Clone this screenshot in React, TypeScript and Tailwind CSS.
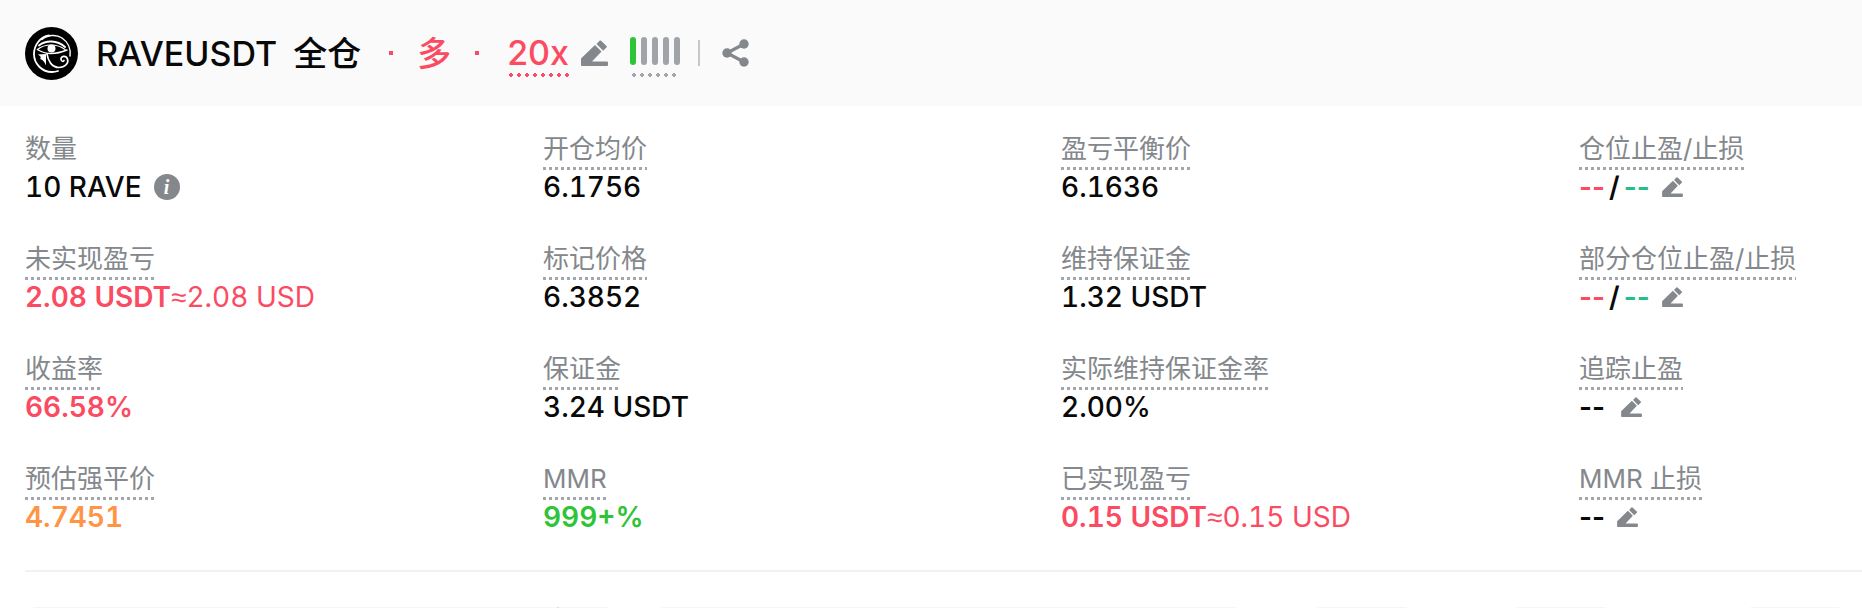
import { ReactNode } from "react"

type Tone = "red" | "black" | "orange" | "green"

interface Item {
    label: string
    underline?: boolean
    value: ReactNode
    tone?: Tone
}

const tones: Record<Tone, string> = {
    red: "text-[#fb4b62] font-semibold",
    black: "text-[#090909] font-medium",
    orange: "text-[#ff9446] font-semibold",
    green: "text-[#2dc437] font-semibold",
}

const PencilIcon = ({ className }: { className: string }) => (
    <svg className={className} viewBox="0 0 27 26" fill="currentColor" aria-hidden="true">
        <path d="M1 26Q0 26 0 25V18.500L14 5L20.500 11.500L11 21.500H26Q27 21.500 27 22.500V25Q27 26 26 26Z" />
        <path d="M15.500 4L18.500 .8Q19.300 0 20.100 .8L25.500 6Q26.300 6.800 25.500 7.600L22.200 10.800Z" />
    </svg>
)

const ShareIcon = () => (
    <svg className="h-7 w-[27px]" viewBox="0 0 27 28" aria-hidden="true">
        <path d="M22 5L5 14L22 23" fill="none" stroke="currentColor" strokeWidth="3.200" />
        <circle cx="22" cy="5" r="4.700" fill="currentColor" />
        <circle cx="5" cy="14" r="4.700" fill="currentColor" />
        <circle cx="22" cy="23" r="4.700" fill="currentColor" />
    </svg>
)

const CoinLogo = () => (
    <svg className="size-[53px]" viewBox="0 0 53 53" fill="none" role="img" aria-label="RAVE">
        <circle cx="26.500" cy="26.500" r="26.500" fill="#000" />
        <g stroke="#fff" strokeLinecap="round">
            <path d="M24 8.500C15 10 9 18 9 27C9 37 17 45 27 45C29.500 45 31.500 44.500 33 44" strokeWidth="1.800" />
            <path d="M17 12.500C22 8 31 7 37 11C43 15 46 22 45 29" strokeWidth="1.500" />
            <path d="M14 18.500C21 13 32 13 40 20" strokeWidth="1.900" />
            <path d="M12.500 22.500C20 16.500 32 16.500 40 22.500" strokeWidth="1.200" />
            <path d="M12.500 22.500C20 27.500 31 27.500 42 23" strokeWidth="1.500" />
            <path d="M22 27C23 34 27 40.500 34 40.500C40 40.500 44 36 42.500 32C41 28 35.500 29 36 32.500C36.300 34.500 38.500 34.800 39 33.500" strokeWidth="1.700" />
        </g>
        <path d="M12.500 27.500L21 27V38.500C19.500 35 18 32.500 15 32C16.500 31 16 29 12.500 27.500Z" fill="#fff" />
        <circle cx="26.500" cy="21.500" r="4" fill="#fff" />
    </svg>
)

const EditButton = ({ label, className = "ml-4" }: { label: string; className?: string }) => (
    <button type="button" aria-label={label} className={`${className} text-[#84888c]`}>
        <PencilIcon className="h-5 w-[21px]" />
    </button>
)

const Dashes = ({ className = "" }: { className?: string }) => (
    <span className={`font-semibold normal-nums ${className}`}>--</span>
)

const Pair = ({ label }: { label: string }) => (
    <>
        <Dashes className="text-[#fb4b62]" />
        <span className="mx-1 font-semibold normal-nums">/</span>
        <Dashes className="text-[#22c088]" />
        <EditButton label={label} className="ml-3" />
    </>
)

const Approx = ({ children }: { children: ReactNode }) => (
    <span className="font-normal"><span className="font-['Liberation_Sans',sans-serif] text-[28px]">≈</span>{children}</span>
)

const columns: Item[][] = [
    [
        {
            label: "数量",
            underline: false,
            value: (
                <>
                    10 RAVE
                    <button type="button" aria-label="数量说明" className="ml-3 size-[26px] rounded-full bg-[#84888c] text-center font-['Liberation_Serif',serif] text-xl leading-6 font-bold text-white italic">
                        i
                    </button>
                </>
            ),
        },
        { label: "未实现盈亏", value: <>2.08 USDT<Approx>2.08 USD</Approx></>, tone: "red" },
        { label: "收益率", value: "66.58%", tone: "red" },
        { label: "预估强平价", value: "4.7451", tone: "orange" },
    ],
    [
        { label: "开仓均价", value: "6.1756" },
        { label: "标记价格", value: "6.3852" },
        { label: "保证金", value: "3.24 USDT" },
        { label: "MMR", value: "999+%", tone: "green" },
    ],
    [
        { label: "盈亏平衡价", value: "6.1636" },
        { label: "维持保证金", value: "1.32 USDT" },
        { label: "实际维持保证金率", value: "2.00%" },
        { label: "已实现盈亏", value: <>0.15 USDT<Approx>0.15 USD</Approx></>, tone: "red" },
    ],
    [
        { label: "仓位止盈/止损", value: <Pair label="编辑仓位止盈/止损" /> },
        { label: "部分仓位止盈/止损", value: <Pair label="编辑部分仓位止盈/止损" /> },
        { label: "追踪止盈", value: <><Dashes /><EditButton label="编辑追踪止盈" /></> },
        { label: "MMR 止损", value: <><Dashes /><EditButton label="编辑 MMR 止损" className="ml-3" /></> },
    ],
]

// repeating dots, drawn as a background so the pitch stays fixed
const DOTS = "bg-[repeating-linear-gradient(90deg,#a3a7ab_0_3px,transparent_3px_6px)] bg-[length:100%_3px] bg-bottom-left bg-no-repeat"

const Field = ({ label, underline = true, value, tone = "black" }: Item) => (
    <div className="flex h-[110px] flex-col items-start">
        <dt className={`h-10 text-[26px] leading-[38px] whitespace-nowrap text-[#84888c] ${underline ? DOTS : ""}`}>{label}</dt>
        <dd className={`flex h-[34px] items-center text-[28px] leading-[34px] whitespace-nowrap tabular-nums ${tones[tone]}`}>{value}</dd>
    </div>
)

const App = () => {
    return (
        <div className="h-screen overflow-hidden bg-white font-['Inter','Noto_Sans_CJK_SC',sans-serif]">
            <header className="flex h-[106px] items-center bg-[#fafafa] pl-[25px] text-[34px] font-medium text-[#fb4b62]">
                <CoinLogo />
                <h1 className="ml-[18px] text-[#090909]">RAVEUSDT</h1>
                <span className="ml-4 text-[#090909]">全仓</span>
                <span className="ml-7 size-1 bg-current" />
                <span className="ml-6">多</span>
                <span className="ml-6 size-1 bg-current" />
                <button type="button" className="ml-7 bg-[radial-gradient(circle,#fb4b62_2px,transparent_2px)] bg-[length:8px_4px] bg-bottom-left bg-repeat-x leading-[48px]">20x</button>
                <button type="button" aria-label="调整杠杆" className="ml-3 text-[#84888c]">
                    <PencilIcon className="h-[26px] w-[27px]" />
                </button>
                <div className="mt-2 ml-[22px] flex h-10 gap-[5px] bg-[radial-gradient(circle,#a3a7ab_2px,transparent_2px)] bg-[length:8px_4px] bg-bottom-left bg-repeat-x">
                    <span className="h-7 w-1.5 rounded-full bg-[#2dc437]" />
                    <span className="h-7 w-1.5 rounded-full bg-[#a0a3a7]" />
                    <span className="h-7 w-1.5 rounded-full bg-[#a0a3a7]" />
                    <span className="h-7 w-1.5 rounded-full bg-[#a0a3a7]" />
                    <span className="h-7 w-1.5 rounded-full bg-[#a0a3a7]" />
                </div>
                <span className="ml-[18px] h-[26px] w-0.5 bg-[#c4c7ca]" />
                <button type="button" aria-label="分享" className="ml-[22px] text-[#84888c]">
                    <ShareIcon />
                </button>
            </header>

            <main className="pl-[25px]">
                <dl className="grid grid-cols-[518fr_518fr_518fr_283fr] pt-6">
                    {columns.map((items, i) => (
                        <div key={i} className="min-w-0">
                            {items.map((item) => <Field key={item.label} {...item} />)}
                        </div>
                    ))}
                </dl>
                <hr className="border-t-2 border-[#f2f2f3]" />

                {/* action bar, continues below the fold */}
                <div className="mt-[35px] flex h-16 pr-3.5">
                    <div className="flex flex-1 justify-end rounded-xl bg-[#f5f5f5]">
                        <span className="mr-[58px] w-0.5 bg-[#dcdddf]" />
                    </div>
                    <div className="ml-9 flex-1 rounded-xl bg-[#f5f5f5]" />
                    <div className="ml-16 w-[106px] rounded-xl bg-[#f5f5f5]" />
                    <div className="ml-[93px] w-[106px] rounded-xl bg-[#f5f5f5]" />
                    <div className="ml-32 w-[106px] rounded-xl bg-[#f5f5f5]" />
                </div>
            </main>
        </div>
    )
}

export default App
